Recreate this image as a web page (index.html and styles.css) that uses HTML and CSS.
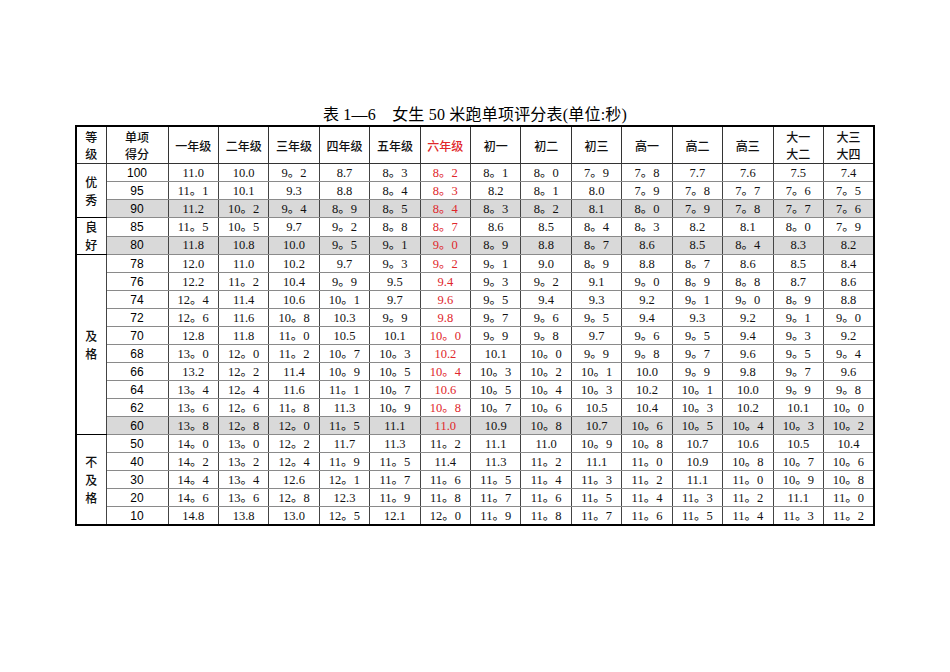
FILE: index.html
```html
<!DOCTYPE html>
<html lang="zh">
<head>
<meta charset="utf-8">
<link rel="stylesheet" href="styles.css">
</head>
<body>
<div class="page">
  <h1 class="title">表 1—6　女生 50 米跑单项评分表(单位:秒)</h1>
  <table class="score">
    <colgroup>
      <col class="c-grade"><col class="c-pts">
      <col><col><col><col><col><col><col><col><col><col><col><col><col><col>
    </colgroup>
    <thead>
      <tr>
        <th>等<br>级</th><th>单项<br>得分</th>
        <th>一年级</th><th>二年级</th><th>三年级</th><th>四年级</th><th>五年级</th><th class="red">六年级</th>
        <th>初一</th><th>初二</th><th>初三</th><th>高一</th><th>高二</th><th>高三</th><th>大一<br>大二</th><th>大三<br>大四</th>
      </tr>
    </thead>
    <tbody id="body"></tbody>
  </table>
</div>
<script src="app.js"></script>
</body>
</html>
```
FILE: app.js
```js
var groups = [
  { label: "优<br>秀", red: true, rows: [
    ["100", false, "11.0 10.0 9。2 8.7 8。3 8。2 8。1 8。0 7。9 7。8 7.7 7.6 7.5 7.4"],
    ["95", false, "11。1 10.1 9.3 8.8 8。4 8。3 8.2 8。1 8.0 7。9 7。8 7。7 7。6 7。5"],
    ["90", true, "11.2 10。2 9。4 8。9 8。5 8。4 8。3 8。2 8.1 8。0 7。9 7。8 7。7 7。6"]
  ]},
  { label: "良<br>好", red: true, rows: [
    ["85", false, "11。5 10。5 9.7 9。2 8。8 8。7 8.6 8.5 8。4 8。3 8.2 8.1 8。0 7。9"],
    ["80", true, "11.8 10.8 10.0 9。5 9。1 9。0 8。9 8.8 8。7 8.6 8.5 8。4 8.3 8.2"]
  ]},
  { label: "及<br>格", red: true, rows: [
    ["78", false, "12.0 11.0 10.2 9.7 9。3 9。2 9。1 9.0 8。9 8.8 8。7 8.6 8.5 8.4"],
    ["76", false, "12.2 11。2 10.4 9。9 9.5 9.4 9。3 9。2 9.1 9。0 8。9 8。8 8.7 8.6"],
    ["74", false, "12。4 11.4 10.6 10。1 9.7 9.6 9。5 9.4 9.3 9.2 9。1 9。0 8。9 8.8"],
    ["72", false, "12。6 11.6 10。8 10.3 9。9 9.8 9。7 9。6 9。5 9.4 9.3 9.2 9。1 9。0"],
    ["70", false, "12.8 11.8 11。0 10.5 10.1 10。0 9。9 9。8 9.7 9。6 9。5 9.4 9。3 9.2"],
    ["68", false, "13。0 12。0 11。2 10。7 10。3 10.2 10.1 10。0 9。9 9。8 9。7 9.6 9。5 9。4"],
    ["66", false, "13.2 12。2 11.4 10。9 10。5 10。4 10。3 10。2 10。1 10.0 9。9 9.8 9。7 9.6"],
    ["64", false, "13。4 12。4 11.6 11。1 10。7 10.6 10。5 10。4 10。3 10.2 10。1 10.0 9。9 9。8"],
    ["62", false, "13。6 12。6 11。8 11.3 10。9 10。8 10。7 10。6 10.5 10.4 10。3 10.2 10.1 10。0"],
    ["60", true, "13。8 12。8 12。0 11。5 11.1 11.0 10.9 10。8 10.7 10。6 10。5 10。4 10。3 10。2"]
  ]},
  { label: "不<br>及<br>格", red: false, rows: [
    ["50", false, "14。0 13。0 12。2 11.7 11.3 11。2 11.1 11.0 10。9 10。8 10.7 10.6 10.5 10.4"],
    ["40", false, "14。2 13。2 12。4 11。9 11。5 11.4 11.3 11。2 11.1 11。0 10.9 10。8 10。7 10。6"],
    ["30", false, "14。4 13。4 12.6 12。1 11。7 11。6 11。5 11。4 11。3 11。2 11.1 11。0 10。9 10。8"],
    ["20", false, "14。6 13。6 12。8 12.3 11。9 11。8 11。7 11。6 11。5 11。4 11。3 11。2 11.1 11。0"],
    ["10", false, "14.8 13.8 13.0 12。5 12.1 12。0 11。9 11。8 11。7 11。6 11。5 11。4 11。3 11。2"]
  ]}
];
var html = "";
groups.forEach(function (g) {
  g.rows.forEach(function (r, i) {
    var cls = [];
    if (r[1]) cls.push("shade");
    if (i === 0) cls.push("first");
    html += '<tr class="' + cls.join(" ") + '">';
    if (i === 0) html += '<td class="grade" rowspan="' + g.rows.length + '">' + g.label + '</td>';
    html += '<td class="pts">' + r[0] + '</td>';
    r[2].split(" ").forEach(function (v, k) {
      html += '<td class="val' + (k === 5 && g.red ? ' red' : '') + '">' + v + '</td>';
    });
    html += '</tr>';
  });
});
document.getElementById("body").innerHTML = html;
```
FILE: styles.css
```css
html, body {
  margin: 0;
  padding: 0;
  background: #fff;
}
.page {
  padding: 105px 0 0 75px;
  width: 800px;
}
.title {
  margin: 0 0 1px 0;
  text-align: center;
  font-family: "Liberation Serif", "Noto Sans CJK SC", serif;
  font-size: 16px;
  font-weight: normal;
  line-height: 19px;
  color: #000;
  letter-spacing: 0.2px;
}
.score {
  width: 800px;
  table-layout: fixed;
  border-collapse: collapse;
  border: 2px solid #000;
  color: #111;
}
.c-grade { width: 30px; }
.c-pts { width: 62px; }
.score th {
  height: 36px;
  padding: 0;
  font-family: "Noto Sans CJK SC", sans-serif;
  font-size: 12px;
  font-weight: 500;
  line-height: 17px;
  border: 1px solid #333;
  text-align: center;
  vertical-align: middle;
}
.score td {
  height: 17px;
  padding: 0;
  border-left: 1px solid #444;
  border-right: 1px solid #444;
  border-top: 1px solid #8a8a8a;
  border-bottom: 1px solid #8a8a8a;
  text-align: center;
  vertical-align: middle;
  line-height: 16px;
}
.score tr.first td {
  border-top: 1px solid #000;
}
.score td.grade {
  font-family: "Noto Sans CJK SC", sans-serif;
  font-size: 12px;
  font-weight: 500;
  line-height: 18px;
  background: #fff;
  border-top: 1px solid #000;
  border-bottom: 1px solid #000;
}
.score td.pts {
  font-family: "Liberation Sans", "Noto Sans CJK SC", sans-serif;
  font-size: 12px;
  color: #000;
}
.score td.val {
  font-family: "Liberation Serif", "Noto Sans CJK SC", serif;
  font-size: 12.5px;
}
.score tr.shade td.pts,
.score tr.shade td.val {
  background: #d9d9d9;
}
.score .red {
  color: #e0262b;
}
```
